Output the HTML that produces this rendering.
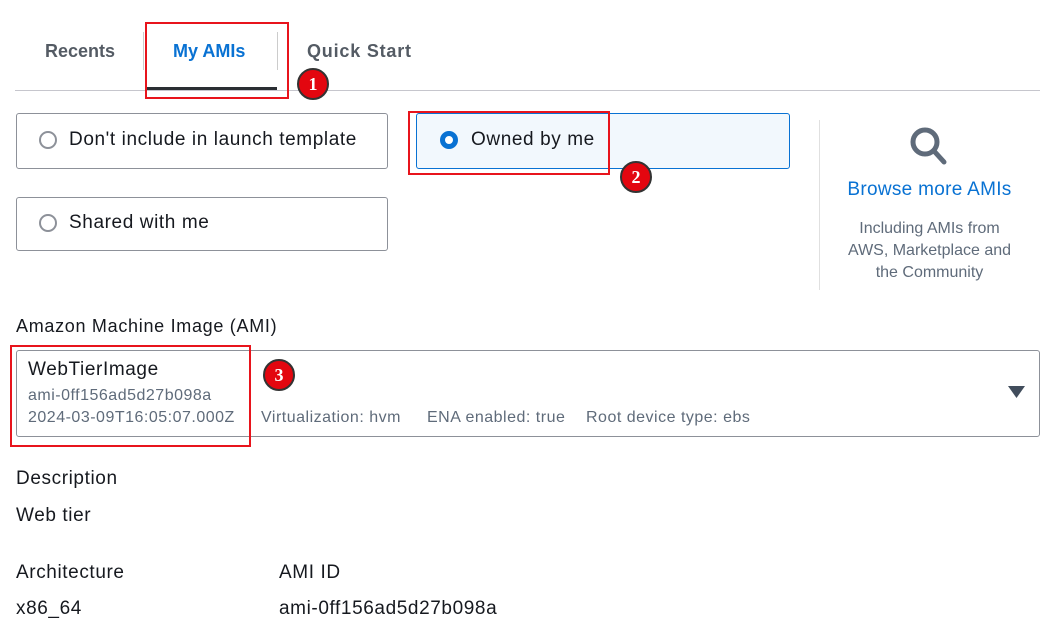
<!DOCTYPE html><html><head><style>
body{margin:0;width:1056px;height:638px;background:#fff;font-family:"Liberation Sans",sans-serif;color:#16191f;position:relative;overflow:hidden}
div,span{position:absolute;box-sizing:border-box}
.t{white-space:nowrap;line-height:1}
.w{font-size:19px;letter-spacing:0.6px}
.s{font-size:16px;letter-spacing:0.5px}
.box{border:1px solid #8d9199;border-radius:3px;background:#fff}
.radio{width:18px;height:18px;border:2px solid #8d9199;border-radius:50%}
.red{border:2px solid #e8141c}
.badge{width:32px;height:32px;border-radius:50%;background:#e3060f;border:2px solid #333;color:#fff;font-weight:bold;font-family:"Liberation Serif",serif;font-size:18px;text-align:center;line-height:28px}
.g{color:#5f6b7a}
</style></head><body>
<div class="t" style="left:45px;top:42px;font-size:18px;font-weight:bold;color:#545b64">Recents</div>
<div style="left:143px;top:32px;width:1px;height:38px;background:#ccc"></div>
<div class="t" style="left:173px;top:42px;font-size:18px;font-weight:bold;color:#0972d3">My AMIs</div>
<div style="left:277px;top:32px;width:1px;height:38px;background:#ccc"></div>
<div class="t" style="left:307px;top:42px;font-size:18px;font-weight:bold;color:#545b64;letter-spacing:0.8px">Quick Start</div>
<div style="left:15px;top:90px;width:1025px;height:1px;background:#c6c6cd"></div>
<div style="left:147px;top:87px;width:130px;height:3px;background:#2a2e33"></div>
<div class="red" style="left:145px;top:22px;width:144px;height:77px"></div>
<div class="badge" style="left:297px;top:68px">1</div>

<div class="box" style="left:16px;top:113px;width:372px;height:56px"></div>
<div class="radio" style="left:39px;top:131px"></div>
<div class="t w" style="left:69px;top:130px">Don't include in launch template</div>
<div class="box" style="left:16px;top:197px;width:372px;height:54px"></div>
<div class="radio" style="left:39px;top:214px"></div>
<div class="t w" style="left:69px;top:213px">Shared with me</div>
<div style="left:416px;top:113px;width:374px;height:56px;border:1px solid #0972d3;border-radius:3px;background:#f2f8fd"></div>
<div style="left:440px;top:131px;width:18px;height:18px;border:5px solid #0972d3;border-radius:50%;background:#fff"></div>
<div class="t w" style="left:471px;top:130px">Owned by me</div>
<div class="red" style="left:408px;top:111px;width:202px;height:64px"></div>
<div class="badge" style="left:620px;top:161px">2</div>

<div style="left:819px;top:120px;width:1px;height:170px;background:#e0e0e0"></div>
<svg style="position:absolute;left:908px;top:125px" width="42" height="42" viewBox="0 0 42 42"><circle cx="17" cy="17" r="12" fill="none" stroke="#5f6b7a" stroke-width="5"/><line x1="26" y1="26" x2="36" y2="37" stroke="#5f6b7a" stroke-width="5" stroke-linecap="round"/></svg>
<div class="t" style="left:820px;width:219px;text-align:center;top:180px;font-size:19px;letter-spacing:0.3px;color:#0972d3">Browse more AMIs</div>
<div class="g" style="left:820px;width:219px;text-align:center;top:218px;font-size:16px;line-height:22px">Including AMIs from<br>AWS, Marketplace and<br>the Community</div>

<div class="t" style="left:16px;top:317px;font-size:18px;letter-spacing:0.7px">Amazon Machine Image (AMI)</div>
<div class="box" style="left:16px;top:350px;width:1024px;height:87px"></div>
<div class="t w" style="left:28px;top:360px">WebTierImage</div>
<div class="t g s" style="left:28px;top:388px">ami-0ff156ad5d27b098a</div>
<div class="t g s" style="left:28px;top:410px">2024-03-09T16:05:07.000Z</div>
<div class="t g s" style="left:261px;top:410px">Virtualization: hvm</div>
<div class="t g s" style="left:427px;top:410px">ENA enabled: true</div>
<div class="t g s" style="left:586px;top:410px">Root device type: ebs</div>
<svg style="position:absolute;left:1008px;top:386px" width="17" height="13"><polygon points="0,0 17,0 8.5,12" fill="#414d5c"/></svg>
<div class="red" style="left:10px;top:345px;width:241px;height:102px"></div>
<div class="badge" style="left:263px;top:359px">3</div>

<div class="t w" style="left:16px;top:469px">Description</div>
<div class="t w" style="left:16px;top:506px">Web tier</div>
<div class="t w" style="left:16px;top:563px">Architecture</div>
<div class="t w" style="left:279px;top:563px">AMI ID</div>
<div class="t w" style="left:16px;top:599px">x86_64</div>
<div class="t w" style="left:279px;top:599px">ami-0ff156ad5d27b098a</div>
</body></html>
